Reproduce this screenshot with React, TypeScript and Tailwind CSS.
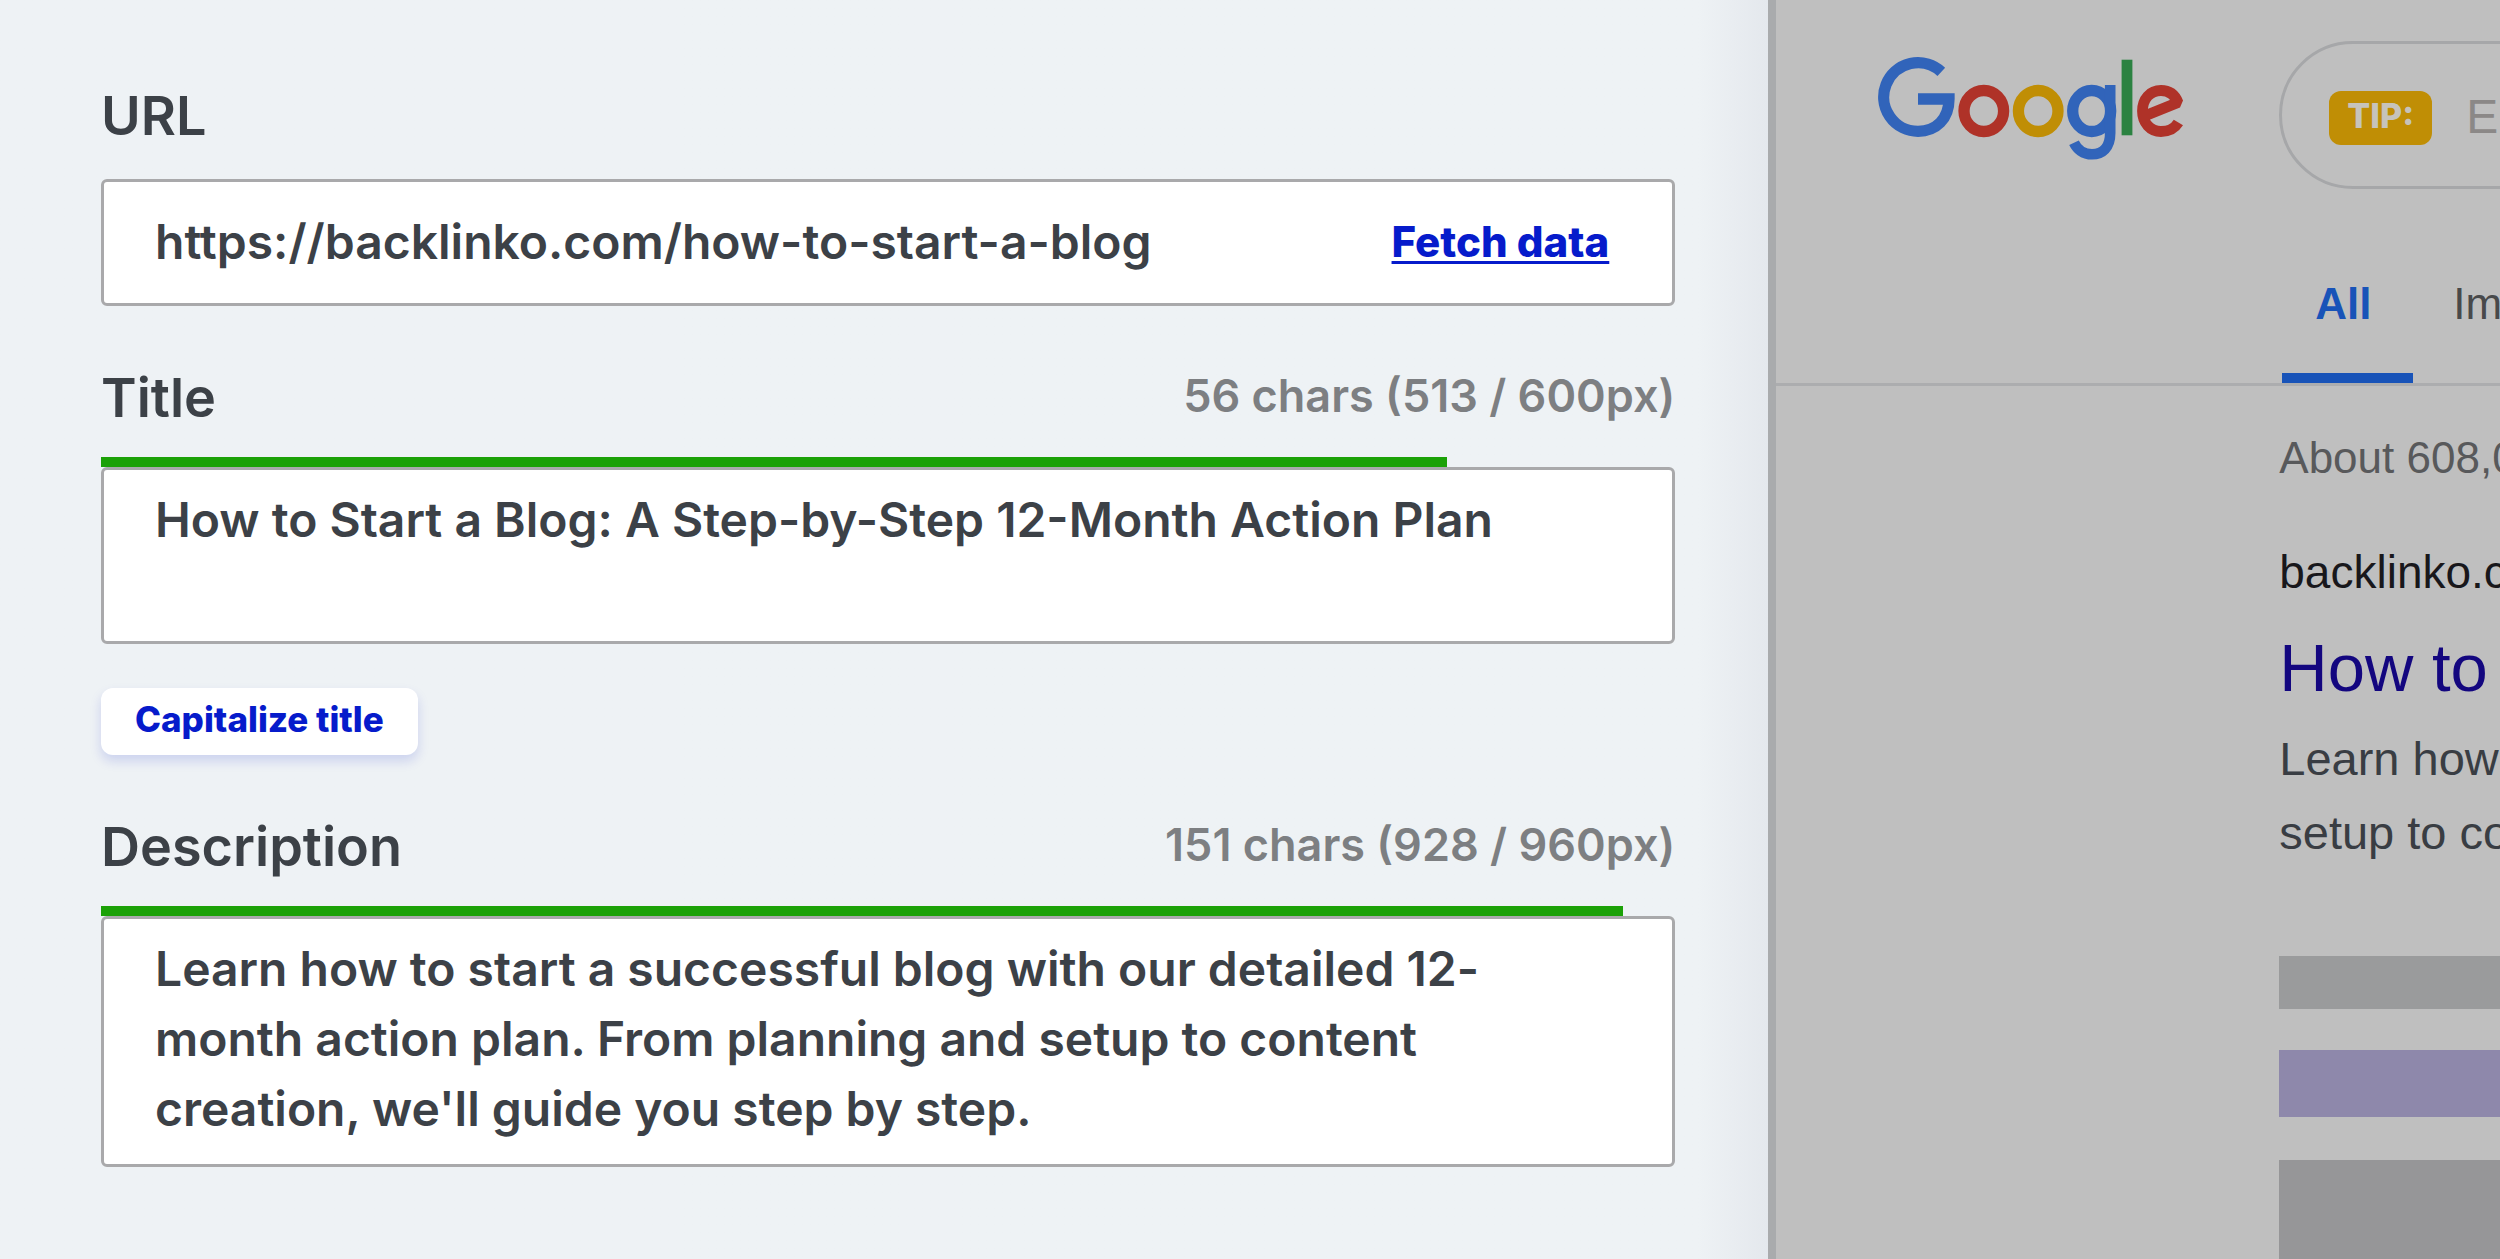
import { useState } from "react";

const TEXTAREA_CLASSES =
  "block w-full resize-none overflow-hidden rounded-md border-3 border-[#a9a9ab] bg-white pt-[15px] pr-12 pl-[51px] text-[48px] leading-[70px] font-semibold text-[#3c4147] outline-none";

type FieldHeaderProps = {
  id: string;
  label: string;
  chars: number;
  width: number;
  limit: number;
};

function FieldHeader({ id, label, chars, width, limit }: FieldHeaderProps) {
  return (
    <>
      <div className="mt-13 mb-[19px] flex items-start justify-between font-semibold">
        <label htmlFor={id} className="text-[54px] leading-[80px]">
          {label}
        </label>
        <span className="text-[45px] leading-[76px] text-[#7d7f82]">
          {chars} chars ({width} / {limit}px)
        </span>
      </div>
      <div className="h-2.5">
        <div
          className="h-full bg-[#1ba107]"
          style={{ width: `${(width / limit) * 100}%` }}
        />
      </div>
    </>
  );
}

function GoogleLogo() {
  return (
    <svg viewBox="0 0 306 103" className="w-[306px]" fill="none" strokeWidth="11.3" role="img" aria-label="Google">
      <path
        d="M63.3 14.8A34.3 34.3 0 1 0 40 74.3C58 74.3 71 62 71 42H40"
        stroke="#3164ba"
      />
      <ellipse cx="105.8" cy="54" rx="19.8" ry="20.5" stroke="#af3228" />
      <ellipse cx="160.2" cy="54" rx="19.8" ry="20.5" stroke="#c08e05" />
      <ellipse cx="213.7" cy="54" rx="19" ry="20.5" stroke="#3164ba" />
      <path
        d="M232.2 28V76C232.2 91 224 97.3 214 97.3C205 97.3 199 92 196 85.7"
        stroke="#3164ba"
        strokeWidth="10.6"
      />
      <path d="M249 2.7V78.3" stroke="#2b8241" strokeWidth="10.8" />
      <path
        d="M269 58L300 45.5C297 38 291 33.5 283 33.5C272 33.5 264.5 42 264.5 54C264.5 66 272.5 74.5 283 74.5C291 74.5 297 71 300.4 65.5"
        stroke="#af3228"
        strokeWidth="10.8"
        strokeLinejoin="bevel"
      />
    </svg>
  );
}

function SearchPreview() {
  return (
    <aside className="min-w-0 overflow-hidden border-l-8 border-[#a9abad] bg-[#bfbfbf] font-['Liberation_Sans',Arial,sans-serif] whitespace-nowrap">
      <header className="border-b-3 border-[#acadaf] pt-[41px]">
        <div className="flex">
          <div className="w-[503px] shrink-0 pt-4 pl-[102px]">
            <GoogleLogo />
          </div>
          <div className="flex h-[148px] w-[900px] shrink-0 items-center rounded-full border-3 border-[#a6a7a9] pl-[47px]">
            <div className="mt-1.5 rounded-xl bg-[#c08e05] px-[18px] pb-1 font-['Inter',sans-serif] text-[34px] leading-[50px] font-extrabold text-[#c6c3bb]">
              TIP:
            </div>
            <input
              aria-label="Search"
              placeholder="Enter a keyword"
              className="mt-1 ml-[34px] flex-1 bg-transparent text-[48px] outline-none placeholder:text-[#8b8887]"
            />
          </div>
        </div>
        <nav className="mt-[89px] flex gap-10 pl-[506px] text-[44px] leading-[52px]">
          <a
            href="#all"
            className="h-[105px] w-[131px] shrink-0 border-b-10 border-[#1853b8] pl-[33px] font-bold text-[#1853b8]"
          >
            All
          </a>
          <a href="#images" className="text-[#48494b]">
            Images
          </a>
        </nav>
      </header>

      <div className="pl-[503px]">
        <p className="mt-[42px] text-[44px] leading-[60px] text-[#58595b]">About 608,000,000 results</p>
        <p className="mt-[54px] text-[46px] leading-[60px] text-[#18171b]">backlinko.com</p>
        <h3 className="mt-[26px] text-[67px] leading-[80px] text-[#13067f]">
          How to Start a Blog
        </h3>
        <p className="mt-3.5 text-[47px] leading-[74px] text-[#393d43]">
          Learn how to start a successful blog
          <br />
          setup to content creation
        </p>
        <div className="mt-[86px] h-[53px] bg-[#9a9b9c]" />
        <div className="mt-[41px] h-[67px] bg-[#8e88ab]" />
        <div className="mt-[43px] h-[99px] bg-[#969698]" />
      </div>
    </aside>
  );
}

export default function App() {
  const [url, setUrl] = useState("https://backlinko.com/how-to-start-a-blog");
  const [title, setTitle] = useState("How to Start a Blog: A Step-by-Step 12-Month Action Plan");
  const [description, setDescription] = useState(
    "Learn how to start a successful blog with our detailed 12-month action plan. From planning and setup to content creation, we'll guide you step by step."
  );

  const capitalizeTitle = () => {
    setTitle(title.replace(/(^|\s)[a-z]/g, (match) => match.toUpperCase()));
  };

  return (
    <div className="grid min-h-screen grid-cols-[29fr_12fr] font-['Inter',sans-serif] text-[#3c4147]">
      <main className="min-w-0 bg-linear-to-r from-[#eef2f5] from-96% to-[#e4e8ed] pt-[76px] pr-[93px] pl-[101px]">
        <label htmlFor="url" className="block text-[54px] leading-[80px] font-semibold">
          URL
        </label>
        <div className="mt-[23px] flex h-[127px] items-center rounded-md border-3 border-[#a9a9ab] bg-white pr-[63px] pl-[51px]">
          <input
            id="url"
            type="text"
            value={url}
            onChange={(e) => setUrl(e.target.value)}
            className="min-w-0 flex-1 pb-0.5 text-[48px] font-semibold outline-none"
          />
          <button
            type="button"
            className="pb-0.5 text-[42px] font-extrabold text-[#061bcb] underline decoration-3 underline-offset-4"
          >
            Fetch data
          </button>
        </div>

        <FieldHeader id="title" label="Title" chars={56} width={513} limit={600} />
        <textarea
          id="title"
          rows={2}
          value={title}
          onChange={(e) => setTitle(e.target.value)}
          className={`${TEXTAREA_CLASSES} pb-4`}
        />

        <button
          type="button"
          onClick={capitalizeTitle}
          className="mt-11 block rounded-xl bg-white px-[34px] pb-1 text-[35px] leading-[63px] font-extrabold text-[#061bcb] shadow-[0_6px_12px_#061bcb26]"
        >
          Capitalize title
        </button>

        <FieldHeader id="description" label="Description" chars={151} width={928} limit={960} />
        <textarea
          id="description"
          rows={3}
          value={description}
          onChange={(e) => setDescription(e.target.value)}
          className={`${TEXTAREA_CLASSES} pb-5`}
        />
      </main>

      <SearchPreview />
    </div>
  );
}
